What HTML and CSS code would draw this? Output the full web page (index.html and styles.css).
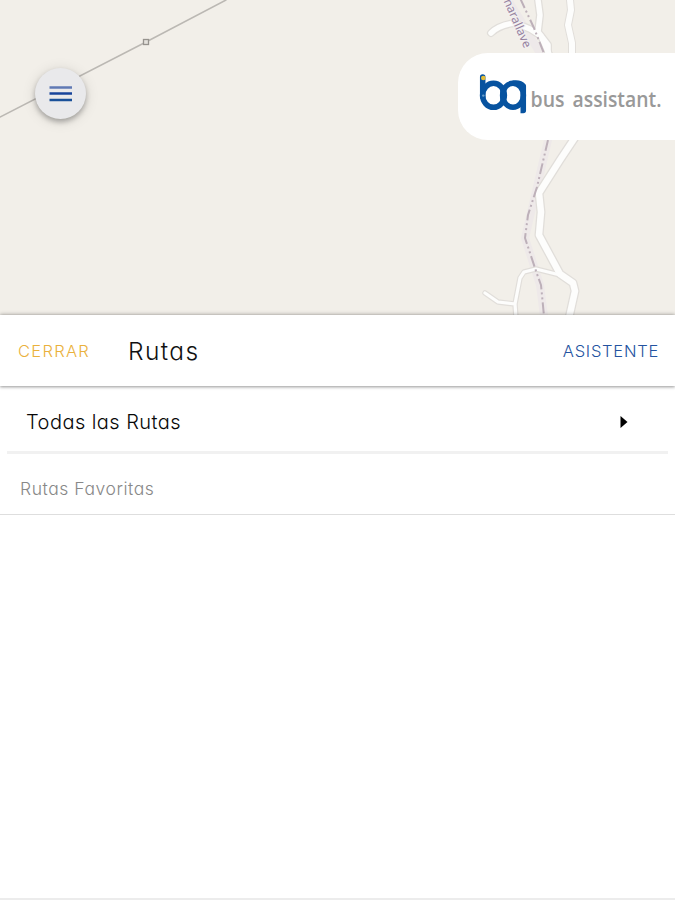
FILE: index.html
```
<!DOCTYPE html>
<html lang="es">
<head>
<meta charset="utf-8">
<meta name="viewport" content="width=device-width, initial-scale=1">
<title>Rutas</title>
<link rel="stylesheet" href="styles.css">
</head>
<body>
<section class="map">
  <svg class="map-art" viewBox="0 0 675 316" aria-hidden="true">
    <path class="power" d="M0 117L146 42L226 0"/>
    <rect class="pole" x="143.500" y="39.500" width="5" height="5"/>
    <path class="zone" d="M508 0L521 21L538 50L548 60L548 140L537 187L525 238L540 285L544 316"/>
    <g class="casing">
      <path class="minor" d="M491 33Q499 25 515 23L530 29L541 36L549 54"/>
      <path class="minor" d="M538 0L540 15L538 32L548 45V60"/>
      <path class="road" d="M570 0L571 10L568 25L572 43V60"/>
      <path class="major" d="M580 130L560 160L539 193L541 212L539 235L560 274L573 283L575 291L569 318"/>
      <path class="lane" d="M560 275L536 269L524 272L520 278L515 304L516 318M515 304L498 302L485 293"/>
    </g>
    <g class="fill">
      <path class="minor" d="M491 33Q499 25 515 23L530 29L541 36L549 54"/>
      <path class="minor" d="M538 0L540 15L538 32L548 45V60"/>
      <path class="road" d="M570 0L571 10L568 25L572 43V60"/>
      <path class="major" d="M580 130L560 160L539 193L541 212L539 235L560 274L573 283L575 291L569 318"/>
      <path class="lane" d="M560 275L536 269L524 272L520 278L515 304L516 318M515 304L498 302L485 293"/>
    </g>
    <path class="border" d="M520 -2L534 28L545 56M548 140L537 187L528 215L525 238L537 274L541 285L544 316"/>
    <text class="place" transform="translate(503.500 1) rotate(66.500)" textLength="52">harallave</text>
  </svg>
  <button class="menu" aria-label="Menú">
    <svg width="24" height="18" viewBox="0 0 24 18"><path d="M.5 2.500H23" stroke="#5f78b4"/><path d="M.5 8.500H23" stroke="#16439b"/><path d="M.5 15H23" stroke="#195099"/></svg>
  </button>
  <div class="brand">
    <svg width="190" height="50" viewBox="475 70 190 50">
      <g fill="none" stroke="#0753a0" stroke-width="5.500">
        <ellipse cx="493.500" cy="95.300" rx="10.900" ry="12"/>
        <ellipse cx="513" cy="95.300" rx="10.400" ry="12"/>
        <path d="M482.700 77V97" stroke-linecap="round"/>
        <path d="M513 83.200Q520 82 523.300 86V110.500H520.500" stroke-linejoin="round"/>
        <path d="M503 89V102"/>
      </g>
      <circle cx="483.300" cy="78" r="2.300" fill="#e4bd38"/>
      <circle cx="483.300" cy="95.600" r="1.200" fill="#6ca1cc"/>
      <text class="brand-name" x="530.500" y="107" textLength="34" lengthAdjust="spacingAndGlyphs">bus</text>
      <text class="brand-name" x="572.500" y="107" textLength="89" lengthAdjust="spacingAndGlyphs">assistant.</text>
    </svg>
  </div>
</section>
<main class="sheet">
  <header class="toolbar">
    <button class="close">CERRAR</button>
    <h1>Rutas</h1>
    <button class="assistant">ASISTENTE</button>
  </header>
  <div class="row">
    <span>Todas las Rutas</span>
    <svg width="8" height="12" viewBox="0 0 8 12"><path d="M0.500 0L7.500 6L0.500 12Z"/></svg>
  </div>
  <h2>Rutas Favoritas</h2>
  <div class="favorites"></div>
</main>
</body>
</html>
```

FILE: styles.css
```
* { box-sizing: border-box; }
body {
  margin: 0;
  height: 900px;
  display: flex;
  flex-direction: column;
  overflow: hidden;
  background: #fff;
  font-family: Inter, "Open Sans", sans-serif;
  font-feature-settings: "cv11";
}
button { border: 0; padding: 0; background: none; font: inherit; font-feature-settings: inherit; }
.map { position: relative; height: 315px; flex: none; background: #f2efe9; overflow: hidden; }
.map-art { display: block; width: 675px; height: 316px; }
.map-art path { fill: none; stroke-linejoin: round; stroke-linecap: round; }
.map-art .power { stroke: #bbb8b3; stroke-width: 1.5; }
.pole { fill: #e4e1dc; stroke: #96938e; stroke-width: 1.3; }
.map-art .zone { stroke: #eee9e9; stroke-width: 8; }
.casing path { stroke: #e1deda; }
.casing .minor { stroke-width: 8; }
.casing .road { stroke-width: 8; }
.casing .major { stroke-width: 9; }
.casing .lane { stroke-width: 5.5; }
.fill path { stroke: #fdfdfc; }
.fill .minor { stroke-width: 5.5; }
.fill .road { stroke-width: 6; }
.fill .major { stroke-width: 6.5; }
.fill .lane { stroke-width: 3.2; }
.map-art .border { stroke: #bdb0b9; stroke-width: 2; stroke-dasharray: 11 3 2 3 2 3; stroke-linecap: butt; }
.place { font: 12px "Noto Sans", sans-serif; fill: #96829e; stroke: #f2eff0; stroke-width: 2px; paint-order: stroke; }
.menu {
  position: absolute;
  left: 35px;
  top: 68px;
  width: 51px;
  height: 51px;
  border-radius: 50%;
  background: #e9e9eb;
  box-shadow: 0 3px 5px rgba(0,0,0,.26), 0 2px 14px rgba(0,0,0,.13);
  display: grid;
  place-items: center;
}
.menu path { stroke-width: 2.5; }
.brand {
  position: absolute;
  left: 458px;
  right: 0;
  top: 53px;
  height: 87px;
  padding: 17px 0 0 17px;
  background: #fff;
  border-radius: 30px 0 0 30px;
}
.brand svg { display: block; }
.brand-name { font: 600 21.5px "Open Sans", sans-serif; fill: #999; }
.sheet { position: relative; flex: 1; display: flex; flex-direction: column; background: #fff; box-shadow: 0 -1px 4px rgba(0,0,0,.2); }
.toolbar {
  height: 71px;
  flex: none;
  padding: 0 16px 0 18px;
  display: flex;
  align-items: center;
  box-shadow: 0 1px 3px rgba(0,0,0,.42);
}
.close, .assistant { font-size: 16.5px; line-height: 24px; font-weight: 300; }
.close { width: 110px; text-align: left; color: #eab13c; letter-spacing: 1.3px; }
h1 { margin: 0; font-size: 24.5px; line-height: 34px; font-weight: 300; letter-spacing: 1.4px; color: #111; }
.assistant { margin-left: auto; color: #2453a0; letter-spacing: .75px; }
.row {
  height: 68px;
  flex: none;
  margin: 0 7px;
  padding: 6px 40px 0 19px;
  display: flex;
  align-items: center;
  justify-content: space-between;
  border-bottom: 3px solid #f1f1f1;
  font-size: 20px;
  font-weight: 350;
  letter-spacing: .45px;
  color: #080808;
}
.row span { padding-top: 1px; }
h2 {
  margin: 0;
  height: 61px;
  flex: none;
  padding: 22px 20px 0;
  font-size: 17.5px;
  line-height: 25px;
  font-weight: 300;
  letter-spacing: .55px;
  color: #888;
  border-bottom: 1px solid #dedede;
}
.favorites { flex: 1; border-bottom: 2px solid #ececec; }
```
